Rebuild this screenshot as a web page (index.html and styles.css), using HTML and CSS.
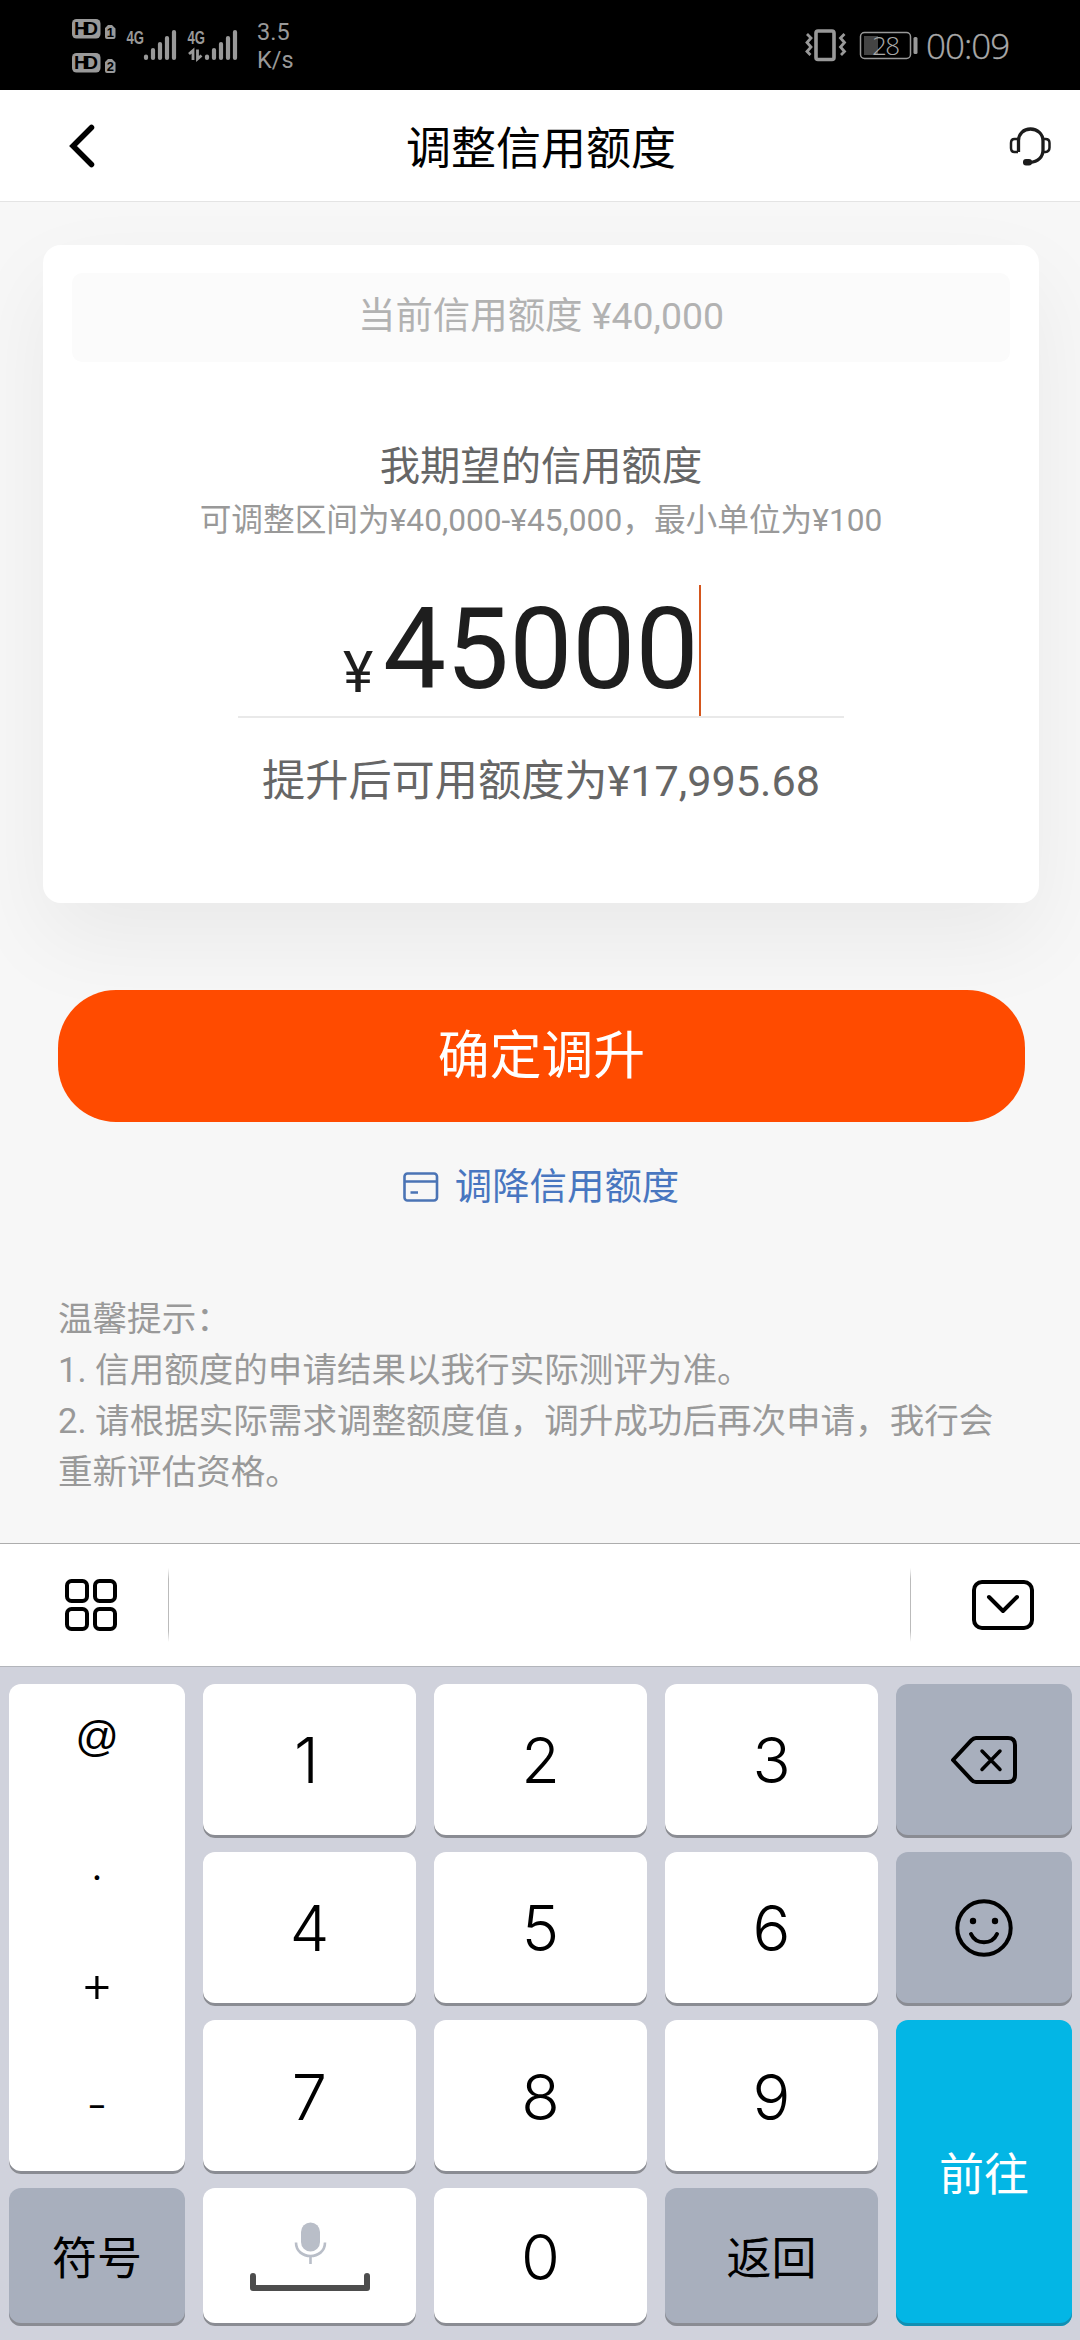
FILE: index.html
```html
<!DOCTYPE html>
<html lang="zh-CN">
<head>
<meta charset="utf-8">
<title>调整信用额度</title>
<link rel="stylesheet" href="styles.css">
</head>
<body>
<div class="screen">
  <div class="status">
    <svg class="status-net" width="250" height="90" viewBox="0 0 250 90">
      <g fill="#999">
        <rect x="22" y="19" width="28.500" height="19.500" rx="4.500"/>
        <rect x="22" y="53" width="28.500" height="19.500" rx="4.500"/>
        <path d="M58 25h4l3.500 3.500V37a2 2 0 0 1-2 2H57a2 2 0 0 1-2-2v-9zM58 59h4l3.500 3.500V71a2 2 0 0 1-2 2H57a2 2 0 0 1-2-2v-9z"/>
      </g>
      <g class="hd">
        <text x="24" y="35" textLength="24">HD</text>
        <text x="24" y="69" textLength="24">HD</text>
      </g>
      <g class="sim">
        <text x="60.300" y="37">1</text>
        <text x="60.300" y="71">2</text>
      </g>
      <g class="gen">
        <text x="76.500" y="43.500" textLength="17.500" lengthAdjust="spacingAndGlyphs">4G</text>
        <text x="137.500" y="43.500" textLength="17.500" lengthAdjust="spacingAndGlyphs">4G</text>
      </g>
      <g stroke="#999" stroke-width="4.200" stroke-linecap="round">
        <path d="M96 56.500v1.500M103 50v8M110 44v14M117 38v20M124 32v26"/>
        <path d="M157 56.500v1.500M164 50v8M171 44v14M178 38v20M185 32v26"/>
      </g>
      <path d="M139 54l4-3.500V60M147.500 49.500V59l4-3.500" fill="none" stroke="#999" stroke-width="2.800"/>
    </svg>
    <div class="speed">3.5<br>K/s</div>
    <svg class="status-power" width="114" height="90" viewBox="0 0 114 90">
      <g fill="none" stroke="#999">
        <rect x="12" y="31" width="18" height="28.500" rx="2" stroke-width="3.600"/>
        <path d="M3 34l4 4-4 4.500 4 4.500-4 4.500 3.500 3.500M40.500 34l-4 4 4 4.500-4 4.500 4 4.500-3.500 3.500" stroke-width="2.800"/>
        <rect x="56.500" y="32.500" width="50" height="26" rx="4" stroke-width="1.500"/>
      </g>
      <rect x="60" y="36" width="14" height="19" fill="#444"/>
      <rect x="109.500" y="37" width="4" height="17" rx="1.500" fill="#999"/>
      <text class="battery-text" x="68" y="54.500" textLength="28">28</text>
    </svg>
    <div class="clock">00:09</div>
  </div>

  <header class="header">
    <svg width="28" height="44" viewBox="0 0 28 44"><path d="M23.500 3.500L5 22l18.500 18.500" fill="none" stroke="#000" stroke-width="5.500" stroke-linecap="round"/></svg>
    <h1>调整信用额度</h1>
    <svg width="44" height="40" viewBox="0 0 44 40" fill="none" stroke="#1c1c1c">
      <path d="M10.500 26V14.500C10.500 8 15.500 3 22.500 3S35 8 35 15v9c0 7-5 12-13 12.500" stroke-width="3.300"/>
      <path d="M10 26H6.500Q3 26 3 22v-5q0-4 3.500-4H10M35 13h2.500q4 0 4 4v4.500q0 4-4 4.500H35" stroke-width="2.500"/>
      <rect x="15" y="33" width="9" height="6.500" rx="3" fill="#1c1c1c" stroke="none"/>
    </svg>
  </header>

  <main class="content">
    <section class="card">
      <div class="current">当前信用额度 ¥40,000</div>
      <h2>我期望的信用额度</h2>
      <div class="range">可调整区间为¥40,000-¥45,000，最小单位为¥100</div>
      <div class="amount"><span class="yen">¥</span><span class="value">45000</span><span class="caret"></span></div>
      <div class="after">提升后可用额度为¥17,995.68</div>
    </section>
    <div class="confirm">确定调升</div>
    <div class="lower">
      <svg width="36" height="30" viewBox="0 0 36 30" fill="none" stroke="#4b74b5" stroke-width="2.600"><rect x="1.500" y="1.500" width="32.500" height="27" rx="3"/><path d="M1.500 9.500h32.500M7.500 20.500h7.500"/></svg>
      <span>调降信用额度</span>
    </div>
    <div class="tips">
      <p>温馨提示：</p>
      <p>1. 信用额度的申请结果以我行实际测评为准。</p>
      <p>2. 请根据实际需求调整额度值，调升成功后再次申请，我行会重新评估资格。</p>
    </div>
  </main>

  <div class="toolbar">
    <svg width="52" height="52" viewBox="0 0 52 52" fill="none" stroke="#000" stroke-width="4"><rect x="2" y="2" width="20" height="20" rx="4.500"/><rect x="30" y="2" width="20" height="20" rx="4.500"/><rect x="2" y="30" width="20" height="20" rx="4.500"/><rect x="30" y="30" width="20" height="20" rx="4.500"/></svg>
    <span class="divider"></span>
    <span class="candidates"></span>
    <span class="divider"></span>
    <svg class="collapse" width="62" height="50" viewBox="0 0 62 50" fill="none" stroke="#000" stroke-width="4"><rect x="2" y="2" width="58" height="46" rx="8"/><path d="M17 17l14 14 14-14" stroke-linecap="round" stroke-linejoin="round"/></svg>
  </div>

  <div class="keyboard">
    <div class="key symbols"><span class="at">@</span><span class="dot">.</span><span class="plus">+</span><span class="minus">-</span></div>
    <div class="key one">1</div>
    <div class="key">2</div>
    <div class="key">3</div>
    <div class="key gray"><svg width="68" height="50" viewBox="0 0 68 50" fill="none" stroke="#000" stroke-width="4" stroke-linejoin="round" stroke-linecap="round"><path d="M3 25L21.500 5.200Q23.500 3 26 3h32q7 0 7 7v30q0 7-7 7H26q-2.500 0-4.500-2.200z"/><path d="M32 16l18 18.500M50 16L32 34.500" stroke-width="3.500"/></svg></div>
    <div class="key">4</div>
    <div class="key">5</div>
    <div class="key">6</div>
    <div class="key gray"><svg width="58" height="58" viewBox="0 0 58 58" fill="none" stroke="#000" stroke-width="4" stroke-linecap="round"><circle cx="29" cy="29" r="26.700"/><circle cx="18" cy="22" r="3.200" fill="#000" stroke="none"/><circle cx="40" cy="22" r="3.200" fill="#000" stroke="none"/><path d="M16 35c5 11 21 11 26 0"/></svg></div>
    <div class="key">7</div>
    <div class="key">8</div>
    <div class="key">9</div>
    <div class="key go">前往</div>
    <div class="key gray word">符号</div>
    <div class="key space"><svg width="120" height="70" viewBox="0 0 120 70" fill="none"><rect x="51" y="0.500" width="19" height="29" rx="9.500" fill="#b9bec8"/><path d="M46 20.500c0 18 29 18 29 0M60.500 34v8" stroke="#b9bec8" stroke-width="2.600"/><path d="M3 54v12h114V54" stroke="#4d4d4d" stroke-width="6" stroke-linecap="round" stroke-linejoin="round"/></svg></div>
    <div class="key">0</div>
    <div class="key gray word">返回</div>
  </div>
</div>
</body>
</html>
```
FILE: styles.css
```css
* { box-sizing: border-box; margin: 0; padding: 0; }
body { width: 1080px; background: #f7f7f7; font-family: Roboto, "Noto Sans CJK SC", sans-serif; }
svg { display: block; flex: none; }
.screen { width: 1080px; height: 2340px; display: flex; flex-direction: column; overflow: hidden; }

.status { height: 90px; flex: none; background: #000; color: #999; display: flex; align-items: flex-start; padding-left: 50px; }
.hd { font: 700 19px "Liberation Sans", sans-serif; }
.sim { font: 700 13px "Liberation Sans", sans-serif; text-anchor: middle; }
.gen { font: 700 18px "Liberation Sans", sans-serif; fill: #999; }
.speed { width: 53px; margin-left: -43px; padding-top: 19px; font-size: 23.500px; line-height: 27.500px; }
.status-power { margin-left: 494px; }
.battery-text { font: 300 26px "Open Sans", sans-serif; fill: #aaa; }
.clock { margin-left: 8px; padding-top: 22px; font: 300 35px/48px "Open Sans", sans-serif; letter-spacing: -1px; color: #aaa; -webkit-text-stroke: 0.3px #aaa; }

.header { height: 112px; flex: none; background: #fff; border-bottom: 1px solid #e4e4e4; display: flex; align-items: center; justify-content: space-between; padding: 0 28px 0 68px; }
.header h1 { font-size: 45px; font-weight: 400; line-height: 60px; color: #000; margin: 8px 0 0 -22px; }

.content { height: 1341px; flex: none; padding: 43px 41px 0 43px; overflow: hidden; }
.card { height: 658px; background: #fff; border-radius: 18px; box-shadow: 0 36px 90px rgba(0, 0, 0, .06); padding: 28px 29px 0; display: flex; flex-direction: column; align-items: center; }
.current { width: 100%; height: 89px; border-radius: 10px; background: #fbfbfb; color: #b2b2b2; font-size: 37.440px; line-height: 87px; text-align: center; }
.card h2 { margin-top: 75px; font-size: 40.320px; font-weight: 400; line-height: 60px; color: #666; }
.range { margin-top: 1px; font-size: 31.680px; line-height: 46px; color: #999; white-space: nowrap; }
.amount { width: 606px; height: 133px; margin-top: 41px; padding-left: 105px; border-bottom: 2px solid #e9e9e9; display: flex; align-items: baseline; color: #1e1e1e; }
.yen { width: 40px; font-size: 57.600px; position: relative; top: 4px; }
.value { font-size: 112.320px; line-height: 129px; }
.caret { align-self: stretch; width: 2px; background: #d4561d; }
.after { margin-top: 39px; font-size: 43.200px; line-height: 50px; color: #666; white-space: nowrap; }
.confirm { height: 132px; margin: 87px 14px 0 15px; border-radius: 58px; background: #ff4b00; color: #fff; font-size: 51.840px; line-height: 133px; text-align: center; position: relative; }
.lower { height: 56px; margin-top: 37px; display: flex; align-items: center; justify-content: center; gap: 16px; color: #4876c0; font-size: 37.440px; line-height: 54px; }
.tips { margin: 79px 0 0 15px; width: 950px; color: #999; font-size: 34.560px; line-height: 51px; }

.toolbar { height: 123px; flex: none; background: #fff; border-top: 1px solid #adadad; display: flex; align-items: center; padding: 0 46px 0 65px; }
.divider { width: 1px; height: 74px; margin-left: 51px; background: linear-gradient(transparent, #bbb 15%, #bbb 85%, transparent); }
.candidates { flex: 1; }
.collapse { margin-left: 61px; }

.keyboard { flex: 1; background: #d0d2dc; border-top: 1px solid #b3b5bb; padding: 17px 8px 0 9px; display: grid; grid-template-columns: 176px 213px 213px 213px 176px; grid-template-rows: 153.500px 154.500px 154px 138px; gap: 14px 18px; }
.key { background: #fff; border-radius: 12px; box-shadow: inset 0 -3px 0 #8a8c93; display: flex; align-items: center; justify-content: center; padding-bottom: 1px; font-family: Inter, "Noto Sans CJK SC", sans-serif; font-size: 63px; font-weight: 350; line-height: 70px; color: #000; }
.one { padding-right: 6px; }
.symbols { grid-row: span 3; flex-direction: column; justify-content: flex-start; }
.symbols span { height: 119px; }
.at { font: 400 43px/105px "Liberation Sans", sans-serif; }
.dot { font-size: 44px; line-height: 123px; }
.plus { font-size: 51px; line-height: 124px; }
.minus { font-size: 46px; line-height: 127px; }
.gray { background: #a8afbd; }
.go { grid-row: span 2; background: #03b6e5; box-shadow: inset 0 -3px 0 #128fb2; color: #fff; font-size: 45px; font-weight: 400; padding-top: 5px; }
.word { font-size: 45px; font-weight: 400; padding-top: 4px; }
```
